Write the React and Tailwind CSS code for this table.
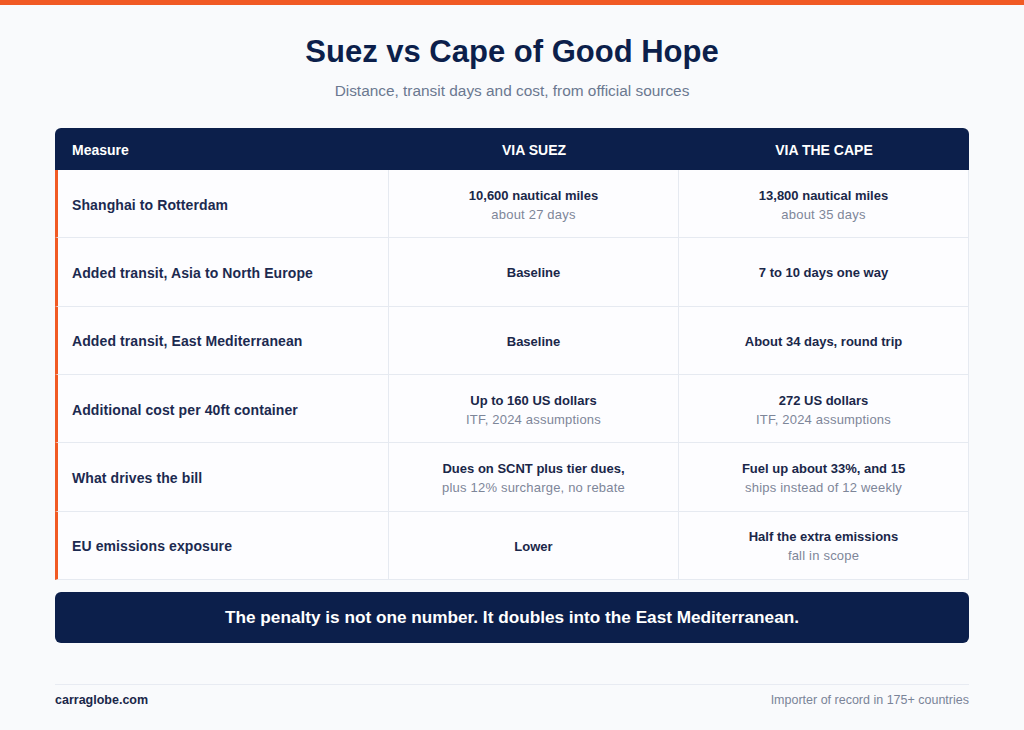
import React from "react";

const rows = [
  { label: "Shanghai to Rotterdam", a: ["10,600 nautical miles", "about 27 days"], b: ["13,800 nautical miles", "about 35 days"] },
  { label: "Added transit, Asia to North Europe", a: ["Baseline"], b: ["7 to 10 days one way"] },
  { label: "Added transit, East Mediterranean", a: ["Baseline"], b: ["About 34 days, round trip"] },
  { label: "Additional cost per 40ft container", a: ["Up to 160 US dollars", "ITF, 2024 assumptions"], b: ["272 US dollars", "ITF, 2024 assumptions"] },
  { label: "What drives the bill", a: ["Dues on SCNT plus tier dues,", "plus 12% surcharge, no rebate"], b: ["Fuel up about 33%, and 15", "ships instead of 12 weekly"] },
  { label: "EU emissions exposure", a: ["Lower"], b: ["Half the extra emissions", "fall in scope"] },
];

function Cell({ lines }) {
  return (
    <div className="flex flex-col items-center justify-center pt-[2px] text-center border-r border-[#e6eaf1] leading-[19px] text-[13px]">
      <div className="font-bold text-[#1a2749]">{lines[0]}</div>
      {lines[1] && <div className="text-[#7d8699] tracking-[0.2px]">{lines[1]}</div>}
    </div>
  );
}

export default function App() {
  return (
    <div className="min-h-[730px] bg-[#f9fafc] font-['Liberation_Sans',Arial,sans-serif]">
      <div className="h-[5px] bg-[#f15a24]" />
      <div className="w-[914px] mx-auto">
        <h1 className="mt-[30px] text-center text-[31px] leading-[34px] font-bold text-[#0c1f4b]">
          Suez vs Cape of Good Hope
        </h1>
        <p className="mt-[13px] text-center text-[15.4px] leading-[18px] text-[#6b7890]">
          Distance, transit days and cost, from official sources
        </p>

        <div className="mt-[28px]">
          <div className="grid grid-cols-[334px_290px_290px] h-[42px] items-center pt-[2px] rounded-t-[6px] bg-[#0c1f4b] text-white text-[14px] font-bold">
            <div className="pl-[17px]">Measure</div>
            <div className="text-center">VIA SUEZ</div>
            <div className="text-center">VIA THE CAPE</div>
          </div>
          {rows.map((r, i) => (
            <div
              key={i}
              className="grid grid-cols-[331px_290px_290px] h-[68.33px] border-l-[3px] border-l-[#f15a24] border-b border-b-[#e6eaf1] bg-[#fdfdff]"
            >
              <div className="flex items-center pl-[14px] pt-[3px] border-r border-[#e6eaf1] text-[14px] tracking-[0.1px] font-bold text-[#1c2a50]">
                {r.label}
              </div>
              <Cell lines={r.a} />
              <Cell lines={r.b} />
            </div>
          ))}
        </div>

        <div className="mt-[12px] h-[51px] rounded-[6px] bg-[#0c1f4b] flex items-center justify-center text-white text-[17.2px] font-bold">
          The penalty is not one number. It doubles into the East Mediterranean.
        </div>

        <div className="mt-[41px] border-t border-[#e8ebf2] pt-[8px] flex justify-between items-center text-[12.5px] leading-[15px]">
          <span className="font-bold text-[#1a2749]">carraglobe.com</span>
          <span className="text-[#7a8498]">Importer of record in 175+ countries</span>
        </div>
      </div>
    </div>
  );
}
